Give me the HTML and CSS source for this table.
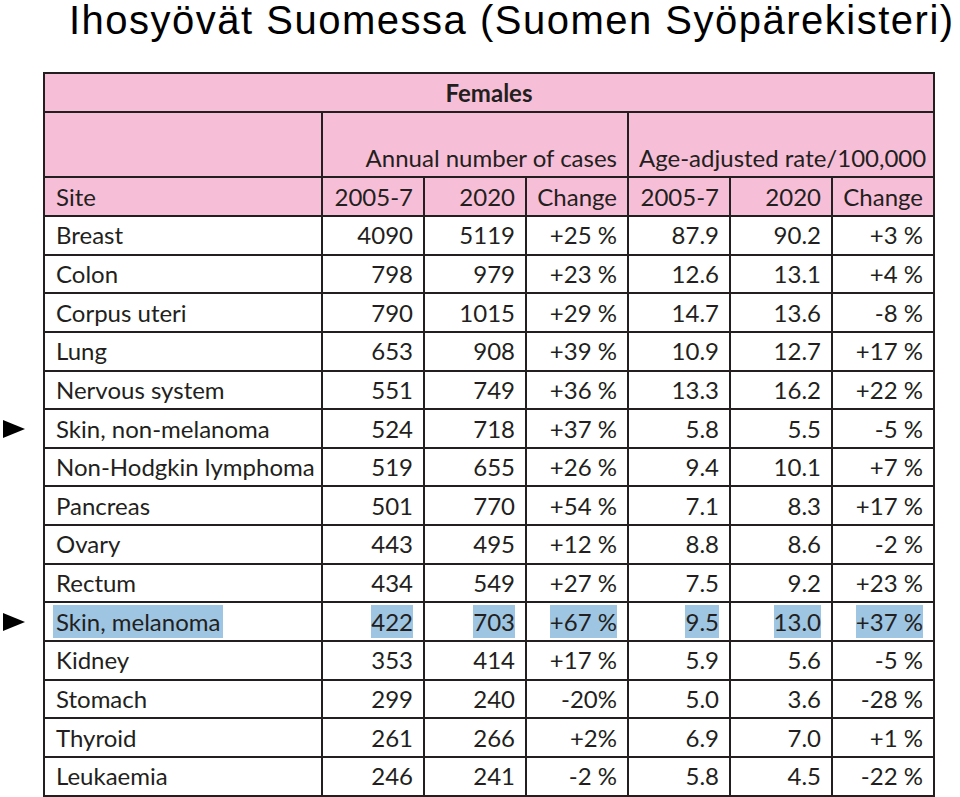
FILE: index.html
```html
<!DOCTYPE html>
<html lang="fi">
<head>
<meta charset="utf-8">
<title>Ihosyövät Suomessa</title>
<link rel="stylesheet" href="styles.css">
</head>
<body>
<h1 class="title">Ihosyövät Suomessa (Suomen Syöpärekisteri)</h1>
<table class="stats">
  <colgroup>
    <col class="c-site">
    <col class="c-num"><col class="c-num"><col class="c-num">
    <col class="c-num"><col class="c-num"><col class="c-num">
  </colgroup>
  <thead>
    <tr class="r-title"><th colspan="7">Females</th></tr>
    <tr class="r-group"><th></th><th colspan="3">Annual number of cases</th><th colspan="3">Age-adjusted rate/100,000</th></tr>
    <tr class="r-cols"><th class="site">Site</th><th>2005-7</th><th>2020</th><th>Change</th><th>2005-7</th><th>2020</th><th>Change</th></tr>
  </thead>
  <tbody>
    <tr><td class="site">Breast</td><td>4090</td><td>5119</td><td>+25 %</td><td>87.9</td><td>90.2</td><td>+3 %</td></tr>
    <tr><td class="site">Colon</td><td>798</td><td>979</td><td>+23 %</td><td>12.6</td><td>13.1</td><td>+4 %</td></tr>
    <tr><td class="site">Corpus uteri</td><td>790</td><td>1015</td><td>+29 %</td><td>14.7</td><td>13.6</td><td>-8 %</td></tr>
    <tr><td class="site">Lung</td><td>653</td><td>908</td><td>+39 %</td><td>10.9</td><td>12.7</td><td>+17 %</td></tr>
    <tr><td class="site">Nervous system</td><td>551</td><td>749</td><td>+36 %</td><td>13.3</td><td>16.2</td><td>+22 %</td></tr>
    <tr><td class="site"><span class="marker"><svg viewBox="0 0 22 18" width="22" height="18"><polygon points="0,0 22,9 0,18" fill="#000"/></svg></span>Skin, non-melanoma</td><td>524</td><td>718</td><td>+37 %</td><td>5.8</td><td>5.5</td><td>-5 %</td></tr>
    <tr><td class="site">Non-Hodgkin lymphoma</td><td>519</td><td>655</td><td>+26 %</td><td>9.4</td><td>10.1</td><td>+7 %</td></tr>
    <tr><td class="site">Pancreas</td><td>501</td><td>770</td><td>+54 %</td><td>7.1</td><td>8.3</td><td>+17 %</td></tr>
    <tr><td class="site">Ovary</td><td>443</td><td>495</td><td>+12 %</td><td>8.8</td><td>8.6</td><td>-2 %</td></tr>
    <tr><td class="site">Rectum</td><td>434</td><td>549</td><td>+27 %</td><td>7.5</td><td>9.2</td><td>+23 %</td></tr>
    <tr class="hl"><td class="site"><span class="marker"><svg viewBox="0 0 22 18" width="22" height="18"><polygon points="0,0 22,9 0,18" fill="#000"/></svg></span><span class="sel">Skin, melanoma</span></td><td><span class="sel">422</span></td><td><span class="sel">703</span></td><td><span class="sel">+67 %</span></td><td><span class="sel">9.5</span></td><td><span class="sel">13.0</span></td><td><span class="sel">+37 %</span></td></tr>
    <tr><td class="site">Kidney</td><td>353</td><td>414</td><td>+17 %</td><td>5.9</td><td>5.6</td><td>-5 %</td></tr>
    <tr><td class="site">Stomach</td><td>299</td><td>240</td><td>-20%</td><td>5.0</td><td>3.6</td><td>-28 %</td></tr>
    <tr><td class="site">Thyroid</td><td>261</td><td>266</td><td>+2%</td><td>6.9</td><td>7.0</td><td>+1 %</td></tr>
    <tr><td class="site">Leukaemia</td><td>246</td><td>241</td><td>-2 %</td><td>5.8</td><td>4.5</td><td>-22 %</td></tr>
  </tbody>
</table>
</body>
</html>
```
FILE: styles.css
```css
html, body {
  margin: 0;
  padding: 0;
  background: #fff;
}
body {
  overflow: hidden;
  height: 797px;
}
.title {
  margin: 0;
  padding-left: 69px;
  font-family: "Liberation Sans", Arial, sans-serif;
  font-weight: normal;
  font-size: 40px;
  line-height: 40px;
  letter-spacing: 1.5px;
  color: #000;
  white-space: nowrap;
}
.stats {
  margin: 32px 0 0 43px;
  border-collapse: collapse;
  table-layout: fixed;
  width: 891px;
  font-family: Lato, "Open Sans", sans-serif;
  font-size: 24px;
  line-height: 28px;
  color: #231f20;
}
.c-site { width: 278px; }
.c-num { width: 102px; }
.stats th, .stats td {
  border: 2px solid #231f20;
  padding: 0 10px;
  text-align: right;
  white-space: nowrap;
  font-weight: normal;
}
.stats thead th {
  background: #f7bed7;
}
.stats .site {
  text-align: left;
  padding-left: 11px;
  position: relative;
}
.r-title th {
  height: 37px;
  text-align: center;
  font-weight: bold;
}
.r-group th {
  height: 59px;
  vertical-align: bottom;
  padding-bottom: 4px;
}
.r-cols th {
  height: 37px;
}
.stats tbody td {
  height: 36.65px;
  background: #fff;
}
.marker {
  position: absolute;
  left: -42px;
  top: 50%;
  margin-top: -9px;
  display: block;
  width: 22px;
  height: 18px;
}
.marker svg { display: block; }
.sel {
  background: #9ec5e2;
  padding: 2px 0;
}
.site .sel {
  margin-left: -3px;
  padding: 2px 3px;
}
```
